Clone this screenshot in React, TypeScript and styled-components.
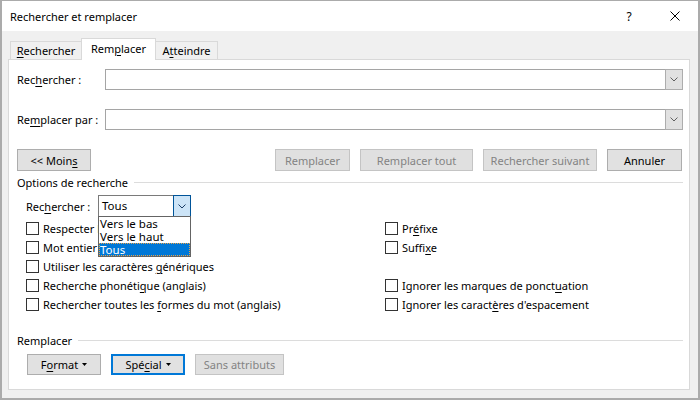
import React from 'react'
import styled, { createGlobalStyle, css } from 'styled-components'

const GlobalStyle = createGlobalStyle`
  html, body {
    margin: 0;
    padding: 0;
    background: #fff;
  }
  body {
    font-family: "Segoe UI", "Noto Sans", sans-serif;
    font-size: 11px;
    color: #000;
  }
  * {
    box-sizing: border-box;
  }
`

const Chevron = () => (
  <svg width="8" height="5" viewBox="0 0 8 5">
    <polyline points="0.5,0.5 4,4 7.5,0.5" fill="none" stroke="currentColor" strokeWidth="1" />
  </svg>
)

const Caret = () => (
  <svg width="5" height="3" viewBox="0 0 5 3">
    <polygon points="0,0 5,0 2.5,3" fill="#000" />
  </svg>
)

export default function App() {
  const checkLeft = [
    <>Respecter la casse</>,
    <>Mot entier uniquement</>,
    <>Utiliser les caractères <U>g</U>énériques</>,
    <>Recherche phonéti<U>q</U>ue (anglais)</>,
    <>Rechercher toutes les <U>f</U>ormes du mot (anglais)</>,
  ]

  const checkRight = [
    <>Pr<U>é</U>fixe</>,
    <>Suffi<U>x</U>e</>,
    null,
    <>Ignorer les marques de ponct<U>u</U>ation</>,
    <>Ignorer les caract<U>è</U>res d'espacement</>,
  ]

  return (
    <>
      <GlobalStyle />
      <Window>
        <TitleBar>
          <Title>Rechercher et remplacer</Title>
          <TitleButton>?</TitleButton>
          <TitleButton>
            <svg width="10" height="10" viewBox="0 0 10 10">
              <path d="M0.5,0.5 L9.5,9.5 M9.5,0.5 L0.5,9.5" stroke="#000" strokeWidth="1" />
            </svg>
          </TitleButton>
        </TitleBar>
        <Body>
          <TabStrip>
            <Tab $w={72}>
              <span>
                <U>R</U>echercher
              </span>
            </Tab>
            <Tab $w={75} $active>
              <span>
                Rem<U>p</U>lacer
              </span>
            </Tab>
            <Tab $w={63}>
              <span>
                A<U>t</U>teindre
              </span>
            </Tab>
          </TabStrip>
          <Panel>
            <FieldRow>
              <FieldLabel>
                Rec<U>h</U>ercher :
              </FieldLabel>
              <Combo>
                <ComboInput />
                <ComboButton>
                  <Chevron />
                </ComboButton>
              </Combo>
            </FieldRow>
            <FieldRow $top={19}>
              <FieldLabel>
                Re<U>m</U>placer par :
              </FieldLabel>
              <Combo>
                <ComboInput />
                <ComboButton>
                  <Chevron />
                </ComboButton>
              </Combo>
            </FieldRow>

            <ActionRow>
              <Button $w={74}>
                <span>
                  &lt;&lt; Moin<U>s</U>
                </span>
              </Button>
              <ActionGroup>
                <Button $w={75} disabled>
                  Remplacer
                </Button>
                <Button $w={113} disabled>
                  Remplacer tout
                </Button>
                <Button $w={114} disabled>
                  Rechercher suivant
                </Button>
                <Button $w={75}>Annuler</Button>
              </ActionGroup>
            </ActionRow>

            <SectionHeader $top={3}>
              <span>Options de recherche</span>
              <SectionLine />
            </SectionHeader>

            <DirectionRow>
              <DirectionLabel>
                Rec<U>h</U>ercher :
              </DirectionLabel>
              <Select>
                <SelectValue>Tous</SelectValue>
                <SelectButton>
                  <Chevron />
                </SelectButton>
                <SelectList>
                  <SelectItem>Vers le bas</SelectItem>
                  <SelectItem>Vers le haut</SelectItem>
                  <SelectItem $selected>Tous</SelectItem>
                </SelectList>
              </Select>
            </DirectionRow>

            <CheckGrid>
              {checkLeft.map((label, i) => (
                <React.Fragment key={i}>
                  <CheckRow>
                    <CheckBox />
                    <span>{label}</span>
                  </CheckRow>
                  {checkRight[i] ? (
                    <CheckRow>
                      <CheckBox />
                      <span>{checkRight[i]}</span>
                    </CheckRow>
                  ) : (
                    <div />
                  )}
                </React.Fragment>
              ))}
            </CheckGrid>

            <SectionHeader $top={18}>
              <span>Remplacer</span>
              <SectionLine />
            </SectionHeader>

            <FormatRow>
              <Button $w={74} $h={21}>
                <span>
                  F<U>o</U>rmat
                </span>
                <Caret />
              </Button>
              <Button $w={74} $h={21} $focused>
                <span>
                  Spé<U>c</U>ial
                </span>
                <Caret />
              </Button>
              <Button $w={89} $h={21} disabled>
                Sans attributs
              </Button>
            </FormatRow>
          </Panel>
        </Body>
      </Window>
    </>
  )
}

const U = styled.span`
  text-decoration: underline;
  text-underline-offset: 2px;
`

const Window = styled.div`
  width: 700px;
  height: 400px;
  display: flex;
  flex-direction: column;
  background: #f0f0f0;
  border: solid #ababab;
  border-width: 1px 2px 2px 2px;
`

const TitleBar = styled.div`
  height: 30px;
  flex: none;
  display: flex;
  align-items: center;
  padding-left: 8px;
  background: #fff;
`

const Title = styled.div`
  flex: 1;
  font-size: 11px;
  line-height: 16px;
  padding-top: 1px;
`

const TitleButton = styled.div`
  width: 46px;
  height: 30px;
  display: flex;
  align-items: center;
  justify-content: center;
  font-size: 12px;
`

const Body = styled.div`
  flex: 1;
  display: flex;
  flex-direction: column;
  padding: 7px 8px 8px 6px;
`

const TabStrip = styled.div`
  position: relative;
  z-index: 1;
  display: flex;
  align-items: flex-end;
  height: 21px;
  padding-left: 2px;
`

const Tab = styled.div<{ $w: number; $active?: boolean }>`
  width: ${(p) => p.$w}px;
  height: 18px;
  display: flex;
  align-items: center;
  justify-content: center;
  margin-left: -1px;
  border: 1px solid #d9d9d9;
  border-bottom: none;
  background: #f0f0f0;
  line-height: 16px;
  white-space: nowrap;

  &:first-child {
    margin-left: 0;
  }

  ${(p) =>
    p.$active &&
    css`
      position: relative;
      z-index: 1;
      height: 22px;
      margin-bottom: -1px;
      padding-bottom: 2px;
      background: #fff;
    `}
`

const Panel = styled.div`
  flex: 1;
  display: flex;
  flex-direction: column;
  padding: 9px 6px 0 8px;
  background: #fff;
  border: 1px solid #d9d9d9;
`

const FieldRow = styled.div<{ $top?: number }>`
  display: flex;
  align-items: center;
  height: 21px;
  margin-top: ${(p) => p.$top ?? 0}px;
`

const FieldLabel = styled.div`
  width: 88px;
  flex: none;
  white-space: nowrap;
`

const Combo = styled.div`
  flex: 1;
  height: 21px;
  display: flex;
  border: 1px solid #a5a5a5;
  background: #fff;
`

const ComboInput = styled.div`
  flex: 1;
`

const ComboButton = styled.div`
  width: 18px;
  margin: -1px -1px -1px 0;
  display: flex;
  align-items: center;
  justify-content: center;
  color: #606060;
  background: #e1e1e1;
  border: 1px solid #adadad;
`

const ActionRow = styled.div`
  display: flex;
  justify-content: space-between;
  margin-top: 19px;
  padding-right: 1px;
`

const ActionGroup = styled.div`
  display: flex;
  gap: 10px;
`

const Button = styled.button<{ $w: number; $h?: number; $focused?: boolean }>`
  width: ${(p) => p.$w}px;
  height: ${(p) => p.$h ?? 22}px;
  display: flex;
  align-items: center;
  justify-content: center;
  gap: 4px;
  padding: 0;
  font: inherit;
  color: #000;
  white-space: nowrap;
  background: #e1e1e1;
  border: 1px solid #adadad;
  border-radius: 0;

  &:disabled {
    color: #838383;
    background: #e0e0e0;
    border-color: #c4c4c4;
  }

  ${(p) =>
    p.$focused &&
    css`
      border: 2px solid #0078d7;
    `}
`

const SectionHeader = styled.div<{ $top: number }>`
  display: flex;
  align-items: center;
  height: 16px;
  margin-top: ${(p) => p.$top}px;
`

const SectionLine = styled.div`
  flex: 1;
  height: 1px;
  margin-left: 6px;
  background: #dcdcdc;
`

const DirectionRow = styled.div`
  display: flex;
  align-items: center;
  height: 22px;
  margin: 5px 0 0 9px;
`

const DirectionLabel = styled.div`
  width: 72px;
  white-space: nowrap;
`

const Select = styled.div`
  position: relative;
  z-index: 2;
  width: 93px;
  height: 22px;
  display: flex;
  border: 1px solid #7a7a7a;
  background: #fff;
`

const SelectValue = styled.div`
  flex: 1;
  padding-left: 3px;
  line-height: 20px;
  font-size: 11.5px;
`

const SelectButton = styled.div`
  width: 18px;
  margin: -1px -1px -1px 0;
  display: flex;
  align-items: center;
  justify-content: center;
  color: #1a3c66;
  background: #cce4f7;
  border: 1px solid #005499;
`

const SelectList = styled.div`
  position: absolute;
  top: 20px;
  left: -1px;
  right: -1px;
  border: 1px solid #646464;
  background: #fff;
`

const SelectItem = styled.div<{ $selected?: boolean }>`
  height: 13px;
  line-height: 13px;
  padding-left: 1px;
  font-size: 11.5px;

  ${(p) =>
    p.$selected &&
    css`
      color: #fff;
      background: #0078d7;
      outline: 1px dotted #e8a34a;
      outline-offset: -1px;
    `}
`

const CheckGrid = styled.div`
  display: grid;
  grid-template-columns: 359px 1fr;
  grid-auto-rows: 19px;
  margin: 2px 0 0 9px;
`

const CheckRow = styled.div`
  display: flex;
  align-items: center;
  gap: 4px;
  white-space: nowrap;
`

const CheckBox = styled.div`
  width: 13px;
  height: 13px;
  flex: none;
  border: 1px solid #333;
  background: #fff;
`

const FormatRow = styled.div`
  display: flex;
  gap: 10px;
  margin: 6px 0 0 10px;
`
